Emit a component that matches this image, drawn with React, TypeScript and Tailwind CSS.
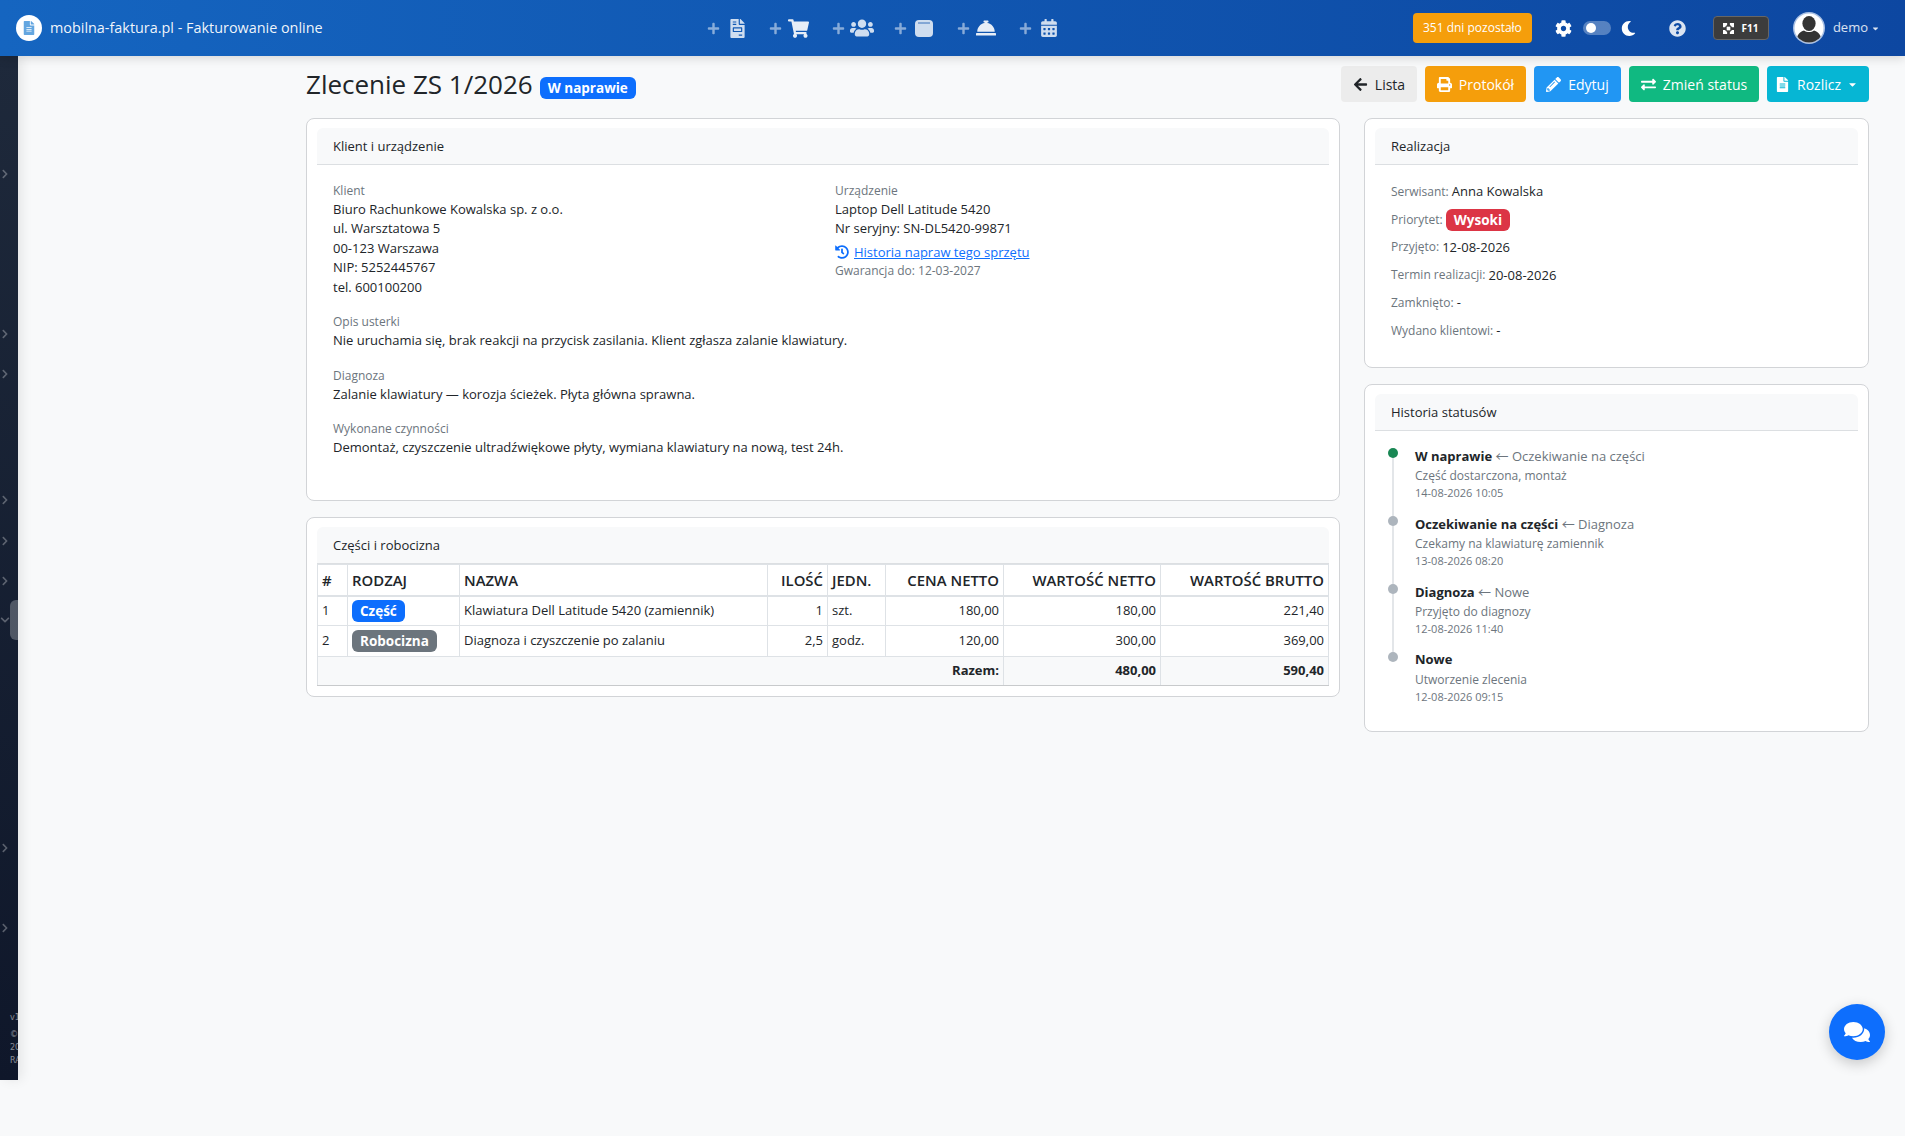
import React from "react";
import {
  FaFileInvoice, FaShoppingCart, FaUsers, FaConciergeBell, FaCalendarAlt, FaCog, FaMoon, FaQuestionCircle,
  FaArrowLeft, FaPrint, FaPencilAlt, FaExchangeAlt, FaFileAlt, FaHistory,
  FaComments, FaPlus, FaChevronRight, FaChevronDown, FaCaretDown,
} from "react-icons/fa";

function Plus() {
  return <FaPlus className="text-[13px] text-white/50" />;
}

function Box() {
  return (
    <svg viewBox="0 0 18 18" className="w-[18px] h-[18px]" fill="currentColor">
      <path d="M4 1h10a4 4 0 0 1 4 4v9a4 4 0 0 1-4 4H4a4 4 0 0 1-4-4V5a4 4 0 0 1 4-4z" />
      <path d="M3 4h12" stroke="#1257ae" strokeWidth="0.8" />
    </svg>
  );
}

function FullscreenIcon() {
  return (
    <svg viewBox="0 0 12 12" className="w-[11px] h-[11px]" fill="currentColor">
      <path d="M0 0h4.5v2.2L3.2 3.2 2.2 4.5H0zM12 0v4.5H9.8L8.8 3.2 7.5 2.2V0zM0 12V7.5h2.2l1 1.3 1.3 1V12zM12 12H7.5V9.8l1.3-1 1-1.3H12z" />
      <rect x="4" y="4" width="4" height="4" />
    </svg>
  );
}

function Avatar() {
  return (
    <svg viewBox="0 0 32 32" className="w-8 h-8 block">
      <clipPath id="avatar-clip"><circle cx="16" cy="16" r="14.5" /></clipPath>
      <circle cx="16" cy="16" r="16" fill="#a9c0e4" />
      <circle cx="16" cy="16" r="14.5" fill="#fff" />
      <g clipPath="url(#avatar-clip)" fill="#333">
        <ellipse cx="16" cy="11.5" rx="6.6" ry="7.5" />
        <path d="M3 32c0-9 4-12.5 8-13.5 3 2 7 2 10 0 4 1 8 4.5 8 13.5z" />
      </g>
    </svg>
  );
}

function NavIcons() {
  return (
    <div className="absolute left-[707px] top-0 h-14 flex items-center text-white/80">
      <div className="w-[62px] flex items-center gap-[8px]"><Plus /><FaFileInvoice className="text-[19px]" /></div>
      <div className="w-[63px] flex items-center gap-[6px]"><Plus /><FaShoppingCart className="text-[21px] text-white/90" /></div>
      <div className="w-[62px] flex items-center gap-[5px]"><Plus /><FaUsers className="text-[24px]" /></div>
      <div className="w-[63px] flex items-center gap-[8px]"><Plus /><Box /></div>
      <div className="w-[62px] flex items-center gap-[6px]"><Plus /><FaConciergeBell className="text-[20px] text-white/90" /></div>
      <div className="flex items-center gap-[8px]"><Plus /><FaCalendarAlt className="text-[18px]" /></div>
    </div>
  );
}

function Header() {
  return (
    <header className="relative h-14 shrink-0 z-20 flex items-center bg-gradient-to-r from-[#1565c0] to-[#0d47a1] shadow-[0_2px_10px_rgba(0,0,0,0.15)]">
      <div className="ml-4 w-[26px] h-[26px] rounded-full bg-white flex items-center justify-center">
        <FaFileAlt className="text-[14px] text-[#64a6e0]" />
      </div>
      <span className="ml-[8px] text-[14.4px] text-white/95">mobilna-faktura.pl - Fakturowanie online</span>
      <NavIcons />
      <div className="ml-auto flex items-center text-white">
        <span className="w-[119px] h-[30px] rounded-[4px] bg-[#f59e0b] text-[12px] flex items-center justify-center">351 dni pozostało</span>
        <FaCog className="ml-[23px] text-[17px]" />
        <span className="ml-[11px] w-7 h-[14px] rounded-full bg-white/30 flex items-center pl-[3px]">
          <span className="w-[10px] h-[10px] rounded-full bg-white" />
        </span>
        <FaMoon className="ml-[10px] text-[15px]" />
        <FaQuestionCircle className="ml-[33px] text-[17px] text-white/85" />
        <span className="ml-[27px] w-[56px] h-6 rounded-[4px] bg-[#3c3c3c] border border-[#666] flex items-center justify-center gap-[7px] text-[10px] font-bold">
          <FullscreenIcon />F11
        </span>
        <span className="ml-6"><Avatar /></span>
        <span className="ml-2 text-[13px] text-white/85">demo</span>
        <FaCaretDown className="ml-[3px] mr-[25px] text-[9px] text-white/85" />
      </div>
    </header>
  );
}

function Sidebar() {
  const Ch = ({ className }: { className: string }) => <FaChevronRight className={"text-[10px] text-white/30 shrink-0 " + className} />;
  return (
    <aside className="relative z-10 w-[18px] h-[1024px] shrink-0 overflow-hidden bg-gradient-to-b from-[#1e293b] to-[#0f172a] shadow-[4px_0_12px_rgba(0,0,0,0.08)] flex flex-col">
      <Ch className="mt-[113px]" />
      <Ch className="mt-[150px]" />
      <Ch className="mt-[30px]" />
      <Ch className="mt-[116px]" />
      <Ch className="mt-[31px]" />
      <Ch className="mt-[30px]" />
      <div className="mt-[14px] h-10 flex items-center shrink-0">
        <FaChevronDown className="text-[10px] text-white/30 shrink-0" />
        <span className="w-2 h-10 rounded-l-md bg-white/25" />
      </div>
      <Ch className="mt-[203px]" />
      <Ch className="mt-[70px]" />
      <div className="mt-auto mb-[13px] pl-[10px] text-[8px] leading-[13px] text-white/50 font-['DejaVu_Sans',sans-serif] whitespace-nowrap">
        <div className="mb-[4px]">v1</div><div>©</div><div>20</div><div>RA</div>
      </div>
    </aside>
  );
}

function Btn({ className, icon, label, caret }: { className: string; icon: React.ReactNode; label: string; caret?: boolean }) {
  return (
    <button className={"h-9 rounded-[4px] text-[14px] flex items-center justify-center gap-[7px] " + className}>
      {icon}
      <span>{label}</span>
      {caret && <FaCaretDown className="-ml-[1px] mr-[3px] text-[11px]" />}
    </button>
  );
}

function Card({ title, className, children }: { title: string; className: string; children: React.ReactNode }) {
  return (
    <section className={"bg-white border border-[#d2d4d7] rounded-[8px] px-[10px] pt-[9px] " + className}>
      <div className="h-[37px] pt-[1px] rounded-t-[6px] bg-[#f8f9fa] border-b border-[#dcdfe2] pl-4 flex items-center text-[13px] text-[#212529]">{title}</div>
      {children}
    </section>
  );
}

function Label({ children }: { children: React.ReactNode }) {
  return <div className="text-[12px] leading-[18px] text-[#6c757d]">{children}</div>;
}

function ClientCard() {
  return (
    <Card title="Klient i urządzenie" className="h-[383px]">
      <div className="px-4 pt-[16.6px] text-[13px] leading-[19.5px] text-[#212529]">
        <div className="grid grid-cols-[502px_1fr]">
          <div>
            <Label>Klient</Label>
            <div>Biuro Rachunkowe Kowalska sp. z o.o.</div>
            <div>ul. Warsztatowa 5</div>
            <div>00-123 Warszawa</div>
            <div>NIP: 5252445767</div>
            <div>tel. 600100200</div>
          </div>
          <div>
            <Label>Urządzenie</Label>
            <div>Laptop Dell Latitude 5420</div>
            <div>Nr seryjny: SN-DL5420-99871</div>
            <a className="mt-[4px] flex items-center gap-[5px] text-[#0d6efd]">
              <FaHistory className="text-[14px]" /><span className="underline">Historia napraw tego sprzętu</span>
            </a>
            <div className="text-[12px] leading-[18px] text-[#6c757d]">Gwarancja do: 12-03-2027</div>
          </div>
        </div>
        <div className="mt-[16px]">
          <Label>Opis usterki</Label>
          <div>Nie uruchamia się, brak reakcji na przycisk zasilania. Klient zgłasza zalanie klawiatury.</div>
        </div>
        <div className="mt-4">
          <Label>Diagnoza</Label>
          <div>Zalanie klawiatury — korozja ścieżek. Płyta główna sprawna.</div>
        </div>
        <div className="mt-[15.5px]">
          <Label>Wykonane czynności</Label>
          <div>Demontaż, czyszczenie ultradźwiękowe płyty, wymiana klawiatury na nową, test 24h.</div>
        </div>
      </div>
    </Card>
  );
}

function PartsCard() {
  const th = "border border-[#dee2e6] px-[4px] font-semibold";
  const td = "border border-[#dee2e6] px-[4px]";
  return (
    <Card title="Części i robocizna" className="h-[180px]">
      <table className="w-[1011px] table-fixed border-collapse text-[13px] text-[#212529] border border-[#c8cacc]">
        <colgroup>
          <col className="w-[30px]" /><col className="w-[112px]" /><col className="w-[308px]" /><col className="w-[60px]" />
          <col className="w-[58px]" /><col className="w-[118px]" /><col className="w-[157px]" /><col className="w-[168px]" />
        </colgroup>
        <thead>
          <tr className="h-[31px] text-[14.9px] border-b-2 border-[#dee2e6]">
            <th className={th + " text-left"}>#</th>
            <th className={th + " text-left"}>RODZAJ</th>
            <th className={th + " text-left"}>NAZWA</th>
            <th className={th + " text-right"}>ILOŚĆ</th>
            <th className={th + " text-left"}>JEDN.</th>
            <th className={th + " text-right"}>CENA NETTO</th>
            <th className={th + " text-right"}>WARTOŚĆ NETTO</th>
            <th className={th + " text-right"}>WARTOŚĆ BRUTTO</th>
          </tr>
        </thead>
        <tbody>
          <tr className="h-[30px]">
            <td className={td}>1</td>
            <td className={td}><span className="inline-flex items-center h-[22px] px-2 rounded-[6px] bg-[#0d6efd] text-white font-bold text-[13.5px]">Część</span></td>
            <td className={td}>Klawiatura Dell Latitude 5420 (zamiennik)</td>
            <td className={td + " text-right"}>1</td>
            <td className={td}>szt.</td>
            <td className={td + " text-right"}>180,00</td>
            <td className={td + " text-right"}>180,00</td>
            <td className={td + " text-right"}>221,40</td>
          </tr>
          <tr className="h-[31px]">
            <td className={td}>2</td>
            <td className={td}><span className="inline-flex items-center h-[22px] px-2 rounded-[6px] bg-[#6c757d] text-white font-bold text-[13.5px]">Robocizna</span></td>
            <td className={td}>Diagnoza i czyszczenie po zalaniu</td>
            <td className={td + " text-right"}>2,5</td>
            <td className={td}>godz.</td>
            <td className={td + " text-right"}>120,00</td>
            <td className={td + " text-right"}>300,00</td>
            <td className={td + " text-right"}>369,00</td>
          </tr>
        </tbody>
        <tfoot>
          <tr className="h-[29px] bg-[#f8f9fa] font-bold">
            <td colSpan={6} className={td + " text-right border-b-[#c8cacc]"}>Razem:</td>
            <td className={td + " text-right border-l-[#c8cacc] border-b-[#c8cacc]"}>480,00</td>
            <td className={td + " text-right border-l-[#c8cacc] border-b-[#c8cacc]"}>590,40</td>
          </tr>
        </tfoot>
      </table>
    </Card>
  );
}

function Info({ label, value }: { label: string; value: React.ReactNode }) {
  return (
    <div className="h-[27.8px] flex items-center gap-[3px] text-[13px] text-[#212529]">
      <span className="text-[12px] text-[#6c757d]">{label}</span>
      {value}
    </div>
  );
}

function RealizationCard() {
  return (
    <Card title="Realizacja" className="h-[250px]">
      <div className="px-4 pt-[13px]">
        <Info label="Serwisant:" value="Anna Kowalska" />
        <Info label="Priorytet:" value={<span className="h-[22px] px-2 rounded-[6px] bg-[#dc3545] text-white font-bold text-[13.5px] flex items-center">Wysoki</span>} />
        <Info label="Przyjęto:" value="12-08-2026" />
        <Info label="Termin realizacji:" value="20-08-2026" />
        <Info label="Zamknięto:" value="-" />
        <Info label="Wydano klientowi:" value="-" />
      </div>
    </Card>
  );
}

const history = [
  { title: "W naprawie", from: "Oczekiwanie na części", note: "Część dostarczona, montaż", date: "14-08-2026 10:05", first: true },
  { title: "Oczekiwanie na części", from: "Diagnoza", note: "Czekamy na klawiaturę zamiennik", date: "13-08-2026 08:20" },
  { title: "Diagnoza", from: "Nowe", note: "Przyjęto do diagnozy", date: "12-08-2026 11:40" },
  { title: "Nowe", from: "", note: "Utworzenie zlecenia", date: "12-08-2026 09:15", last: true },
];

function HistoryCard() {
  return (
    <Card title="Historia statusów" className="h-[348px]">
      <div className="pt-[15px] pl-[13px]">
        {history.map((h) => (
          <div key={h.date} className="relative h-[68px] pl-[27px]">
            {!h.last && <span className="absolute left-[4px] top-[8px] h-[68px] w-[2px] bg-[#e3e6e9]" />}
            <span className={"absolute left-0 top-[2px] w-[10px] h-[10px] rounded-full " + (h.first ? "bg-[#198754]" : "bg-[#adb5bd]")} />
            <div className="h-[19.5px] text-[13px] leading-[19.5px] text-[#6c757d]">
              <b className="font-bold text-[#212529]">{h.title}</b>
              {h.from && <span> <span className="font-['Noto_Sans_CJK_SC',sans-serif]">←</span> {h.from}</span>}
            </div>
            <div className="text-[12px] leading-[19px] text-[#6c757d]">{h.note}</div>
            <div className="text-[11px] leading-[15px] text-[#6c757d]">{h.date}</div>
          </div>
        ))}
      </div>
    </Card>
  );
}

export default function App() {
  return (
    <div className="relative min-h-[1136px] flex flex-col bg-[#f8f9fa] font-['Open_Sans',sans-serif]">
      <Header />
      <div className="flex items-start">
        <Sidebar />
        <main className="flex-1 pl-[288px] pr-9 pt-[10px]">
          <div className="h-9 flex items-center">
            <h1 className="text-[26px] text-[#212529]">Zlecenie ZS 1/2026</h1>
            <span className="ml-[7px] mt-[8px] h-[22px] px-2 rounded-[6px] bg-[#0d6efd] text-white font-bold text-[13.5px] flex items-center">W naprawie</span>
            <div className="ml-auto flex gap-2">
              <Btn className="w-[76px] bg-[#ececec] text-[#212529]" icon={<FaArrowLeft className="text-[15px]" />} label="Lista" />
              <Btn className="w-[101px] bg-[#f59e0b] text-white" icon={<FaPrint className="text-[15px]" />} label="Protokół" />
              <Btn className="w-[87px] bg-[#2196f3] text-white" icon={<FaPencilAlt className="text-[15px]" />} label="Edytuj" />
              <Btn className="w-[130px] bg-[#10b981] text-white" icon={<FaExchangeAlt className="text-[15px]" />} label="Zmień status" />
              <Btn className="w-[102px] bg-[#06b6d4] text-white" icon={<FaFileAlt className="text-[15px]" />} label="Rozlicz" caret />
            </div>
          </div>
          <div className="mt-4 grid grid-cols-[1034px_505px] gap-x-6">
            <div className="flex flex-col gap-4">
              <ClientCard />
              <PartsCard />
            </div>
            <div className="flex flex-col gap-4">
              <RealizationCard />
              <HistoryCard />
            </div>
          </div>
        </main>
      </div>
      <button className="absolute left-[1829px] top-[1004px] z-30 w-14 h-14 rounded-full bg-[#0d6efd] text-white flex items-center justify-center shadow-[0_4px_14px_rgba(0,0,0,0.2)]">
        <FaComments className="text-[26px]" />
      </button>
    </div>
  );
}
